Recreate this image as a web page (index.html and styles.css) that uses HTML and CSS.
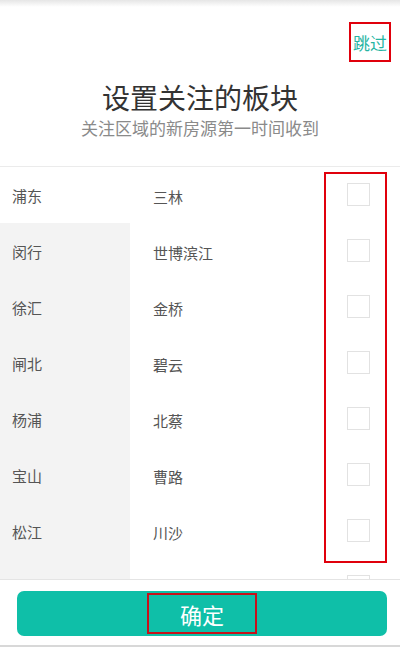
FILE: index.html
```html
<!DOCTYPE html>
<html lang="zh-CN">
  <head>
    <meta charset="UTF-8" />
    <meta name="viewport" content="width=device-width, initial-scale=1.0" />
    <title>设置关注的板块</title>
    <link rel="stylesheet" href="styles.css">
  </head>
  <body>
    <div class="page">
      <div class="header">
        <div class="skip-row">
          <span class="skip mark">跳过</span>
        </div>
        <h2>设置关注的板块</h2>
        <p>关注区域的新房源第一时间收到</p>
      </div>
      <div class="list">
        <ul class="district">
          <li class="active">浦东</li>
          <li>闵行</li>
          <li>徐汇</li>
          <li>闸北</li>
          <li>杨浦</li>
          <li>宝山</li>
          <li>松江</li>
          <li></li>
        </ul>
        <ul class="area">
          <li><span>三林</span><i class="check"></i></li>
          <li><span>世博滨江</span><i class="check"></i></li>
          <li><span>金桥</span><i class="check"></i></li>
          <li><span>碧云</span><i class="check"></i></li>
          <li><span>北蔡</span><i class="check"></i></li>
          <li><span>曹路</span><i class="check"></i></li>
          <li><span>川沙</span><i class="check"></i></li>
          <li><span></span><i class="check"></i></li>
        </ul>
        <div class="check-mark"></div>
      </div>
      <div class="footer">
        <button><span class="mark">确定</span></button>
      </div>
    </div>
  </body>
</html>
```

FILE: styles.css
```css
* {
  margin: 0;
  padding: 0;
  box-sizing: border-box;
  font-family: "Noto Sans CJK SC", "Noto Sans", sans-serif;
}
body {
  background: #fff;
}
.page {
  width: 400px;
  height: 647px;
  display: flex;
  flex-direction: column;
  overflow: hidden;
  background: linear-gradient(#e6e6e6, #fff 7px);
  border-bottom: 2px solid #d8d8d8;
}
.mark {
  border: 2px solid #e0000c;
}
.header {
  height: 167px;
  border-bottom: 1px solid #ebebeb;
  text-align: center;
}
.skip-row {
  display: flex;
  justify-content: flex-end;
  padding: 22px 9px 0 0;
}
.skip {
  width: 42px;
  height: 40px;
  display: flex;
  align-items: center;
  justify-content: center;
  color: #26b5a3;
  font-size: 17px;
}
.header h2 {
  margin-top: 15px;
  font-size: 28px;
  font-weight: 400;
  color: #333;
  line-height: 40px;
}
.header p {
  font-size: 17px;
  color: #8a8a8a;
  line-height: 22px;
}
.list {
  flex: 1;
  display: flex;
  overflow: hidden;
  position: relative;
}
.list ul {
  list-style: none;
}
.list li {
  height: 56px;
  display: flex;
  align-items: center;
  font-size: 15px;
  color: #555;
}
.district {
  width: 130px;
  background: #f3f3f3;
}
.district li {
  padding-left: 12px;
}
.district li.active {
  background: #fff;
}
.area {
  flex: 1;
}
.area li {
  padding-left: 23px;
  justify-content: space-between;
  padding-right: 30px;
}
.area li span {
  margin-top: 2px;
}
.check {
  width: 23px;
  height: 23px;
  border: 1px solid #e2e2e2;
  margin-top: -2px;
}
.check-mark {
  position: absolute;
  left: 324px;
  top: 5px;
  width: 63px;
  height: 391px;
  border: 2px solid #e0000c;
}
.footer {
  height: 66px;
  border-top: 1px solid #e4e4e4;
  background: #fff;
  padding: 11px 13px 0 17px;
}
.footer button {
  width: 100%;
  height: 45px;
  border: none;
  border-radius: 7px;
  background: #0fbfa8;
  display: flex;
  justify-content: center;
  align-items: center;
}
.footer button span {
  width: 110px;
  height: 41px;
  display: flex;
  justify-content: center;
  align-items: center;
  color: #fff;
  font-size: 22px;
  border-color: #c8101a;
}
```
